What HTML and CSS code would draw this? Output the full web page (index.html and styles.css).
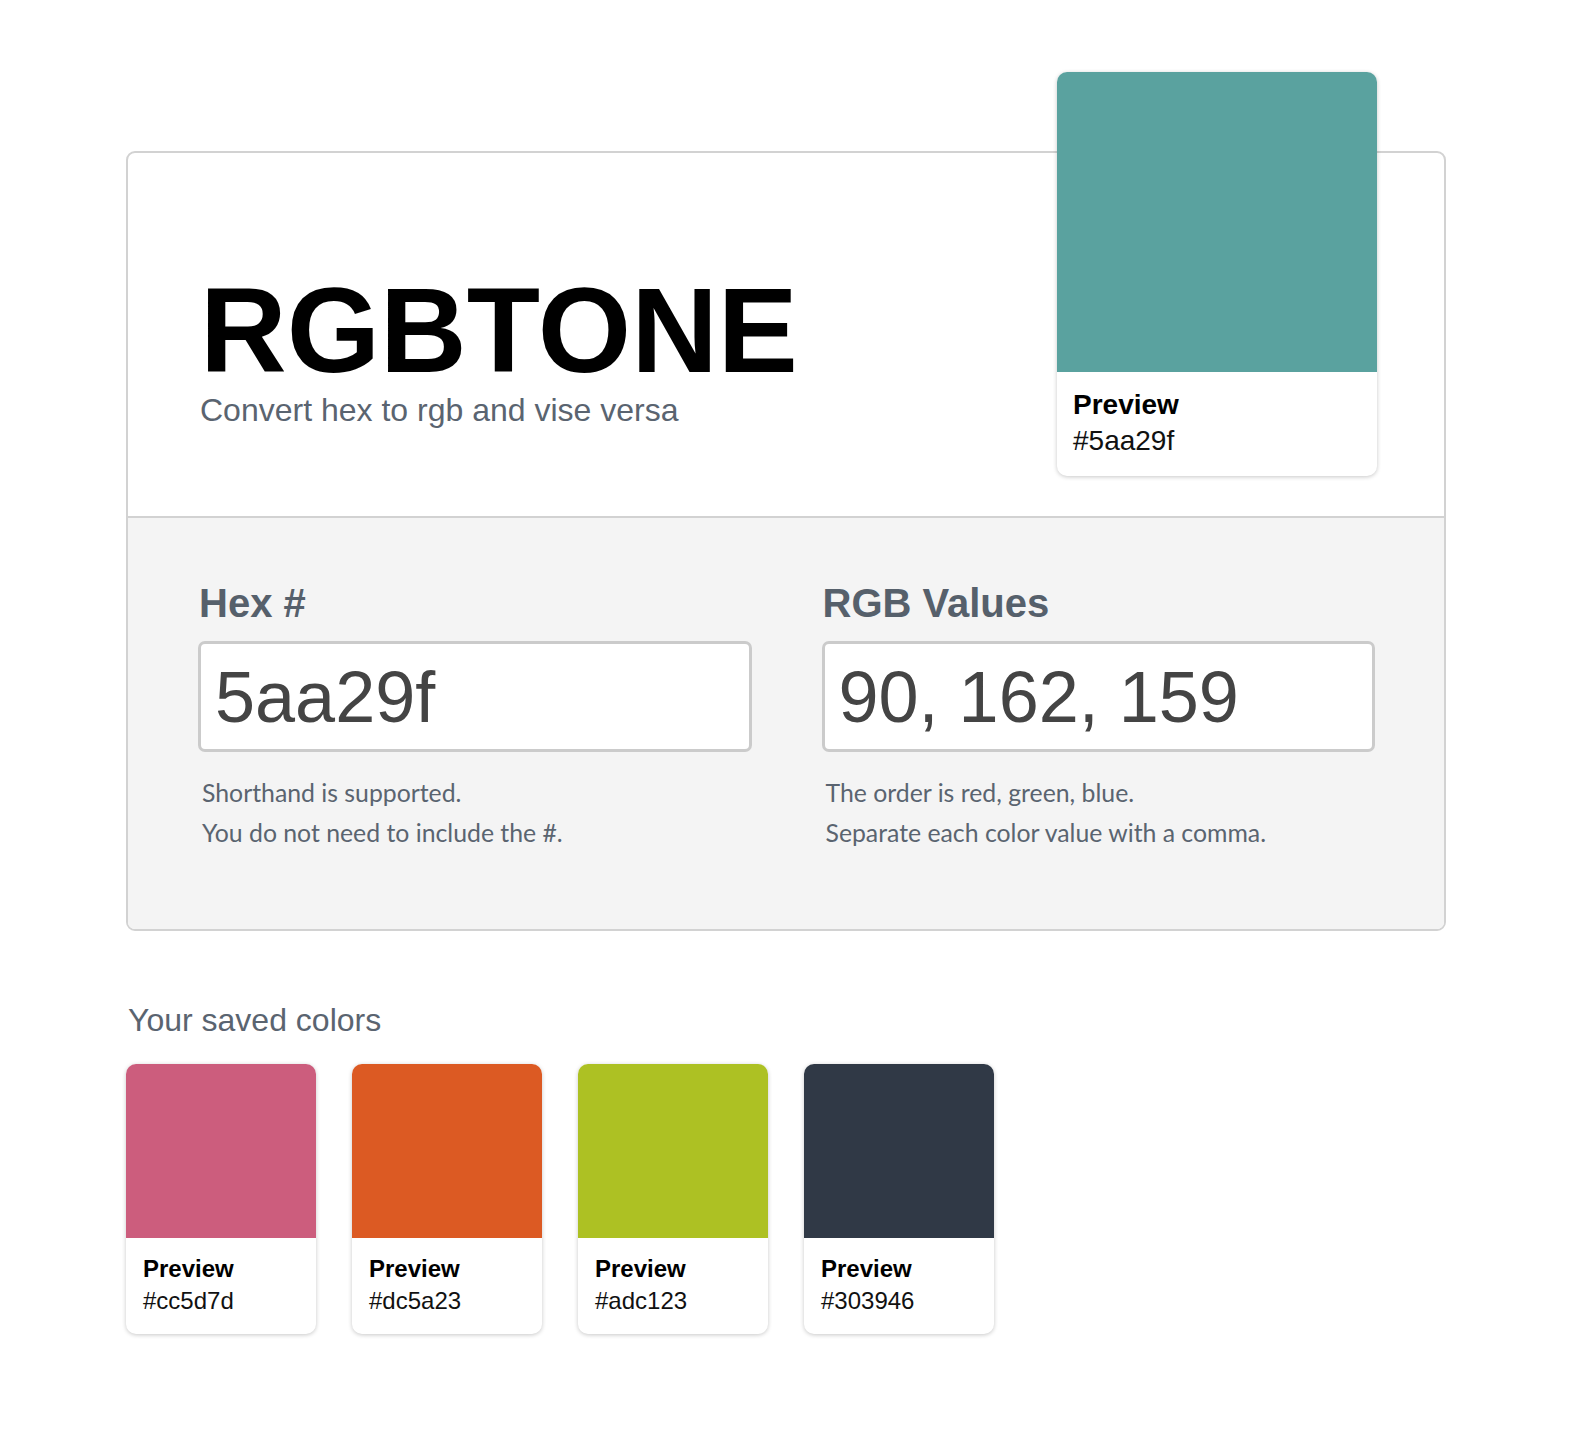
FILE: index.html
```html
<!DOCTYPE html>
<html lang="en">
<head>
<meta charset="utf-8">
<title>RGBTONE</title>
<link rel="stylesheet" href="styles.css">
</head>
<body>
<main class="page">
  <section class="converter">
    <header class="converter-head">
      <div class="brand">
        <h1 class="brand-title">RGBTONE</h1>
        <p class="brand-sub">Convert hex to rgb and vise versa</p>
      </div>
      <div class="swatch-card swatch-card--large">
        <div class="swatch-color" style="background:#5aa29f"></div>
        <div class="swatch-info">
          <div class="swatch-label">Preview</div>
          <div class="swatch-hex">#5aa29f</div>
        </div>
      </div>
    </header>
    <div class="converter-body">
      <div class="field">
        <label class="field-label" for="hex">Hex #</label>
        <input class="field-input" id="hex" type="text" value="5aa29f">
        <div class="field-help">
          <p>Shorthand is supported.</p>
          <p>You do not need to include the #.</p>
        </div>
      </div>
      <div class="field">
        <label class="field-label" for="rgb">RGB Values</label>
        <input class="field-input" id="rgb" type="text" value="90, 162, 159">
        <div class="field-help">
          <p>The order is red, green, blue.</p>
          <p>Separate each color value with a comma.</p>
        </div>
      </div>
    </div>
  </section>

  <section class="saved">
    <h2 class="saved-title">Your saved colors</h2>
    <div class="saved-list">
      <div class="swatch-card swatch-card--small">
        <div class="swatch-color" style="background:#cc5d7d"></div>
        <div class="swatch-info">
          <div class="swatch-label">Preview</div>
          <div class="swatch-hex">#cc5d7d</div>
        </div>
      </div>
      <div class="swatch-card swatch-card--small">
        <div class="swatch-color" style="background:#dc5a23"></div>
        <div class="swatch-info">
          <div class="swatch-label">Preview</div>
          <div class="swatch-hex">#dc5a23</div>
        </div>
      </div>
      <div class="swatch-card swatch-card--small">
        <div class="swatch-color" style="background:#adc123"></div>
        <div class="swatch-info">
          <div class="swatch-label">Preview</div>
          <div class="swatch-hex">#adc123</div>
        </div>
      </div>
      <div class="swatch-card swatch-card--small">
        <div class="swatch-color" style="background:#303946"></div>
        <div class="swatch-info">
          <div class="swatch-label">Preview</div>
          <div class="swatch-hex">#303946</div>
        </div>
      </div>
    </div>
  </section>
</main>
</body>
</html>
```

FILE: styles.css
```css
* {
  box-sizing: border-box;
}

html, body {
  margin: 0;
  padding: 0;
  background: #ffffff;
}

body {
  font-family: "Liberation Sans", Arial, Helvetica, sans-serif;
  color: #111111;
}

.page {
  width: 1320px;
  margin: 0 auto;
  padding: 151px 0 80px;
}

/* ---------- converter card ---------- */
.converter {
  border: 2px solid #d2d2d2;
  border-radius: 9px;
  background: #ffffff;
}

.converter-head {
  display: flex;
  justify-content: space-between;
  align-items: flex-start;
  padding: 0 67px 40px 72px;
  border-bottom: 2px solid #d2d2d2;
}

.brand {
  padding-top: 112px;
}

.brand-title {
  margin: 0;
  font-size: 120px;
  line-height: 130px;
  font-weight: 700;
  letter-spacing: 0;
  color: #000000;
}

.brand-sub {
  margin: 1px 0 0 0;
  font-size: 32px;
  line-height: 28px;
  color: #5a6470;
}

.converter-body {
  display: grid;
  grid-template-columns: 1fr 1fr;
  column-gap: 70px;
  padding: 61px 69px 76px 70px;
  background: #f4f4f4;
  border-radius: 0 0 7px 7px;
}

.field {
  display: flex;
  flex-direction: column;
}

.field-label {
  display: block;
  margin: 0 0 14px 1px;
  font-size: 40px;
  line-height: 48px;
  font-weight: 700;
  color: #56606b;
}

.field-input {
  display: block;
  width: 100%;
  height: 111px;
  margin: 0;
  padding: 0 12px 0 14px;
  border: 3px solid #cbcbcb;
  border-radius: 7px;
  background: #ffffff;
  font-family: "Liberation Sans", Arial, Helvetica, sans-serif;
  font-size: 72px;
  color: #444444;
  outline: none;
}

.field-help {
  margin-top: 21px;
  padding-left: 4px;
  font-family: Lato, "Open Sans", sans-serif;
  font-size: 24.8px;
  line-height: 40px;
  color: #5a6470;
}

.field-help p {
  margin: 0;
}

/* ---------- swatch cards ---------- */
.swatch-card {
  background: #ffffff;
  border-radius: 10px;
  overflow: hidden;
  box-shadow: 0 1px 4px rgba(0, 0, 0, 0.22);
  flex: none;
}

.swatch-card--large {
  width: 320px;
  margin-top: -81px;
}

.swatch-card--large .swatch-color {
  height: 300px;
}

.swatch-card--large .swatch-info {
  padding: 15px 16px 17px;
  font-size: 28px;
  line-height: 36px;
}

.swatch-card--small {
  width: 190px;
}

.swatch-card--small .swatch-color {
  height: 174px;
}

.swatch-card--small .swatch-info {
  padding: 15px 16px 17px 17px;
  font-size: 24px;
  line-height: 32px;
}

.swatch-label {
  font-weight: 700;
  color: #000000;
}

.swatch-hex {
  color: #111111;
}

/* ---------- saved colors ---------- */
.saved {
  margin-top: 71px;
}

.saved-title {
  margin: 0 0 26px 2px;
  font-size: 32px;
  line-height: 36px;
  font-weight: 400;
  color: #5a6470;
}

.saved-list {
  display: flex;
  gap: 36px;
}
```
